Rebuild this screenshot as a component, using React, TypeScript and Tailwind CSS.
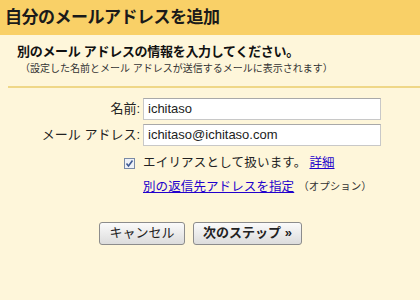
export default function App() {
  const font = "font-['Liberation_Sans','Noto_Sans_CJK_JP',sans-serif]";

  return (
    <div className={`w-[420px] h-[300px] bg-[#fef6da] text-[#222] ${font}`}>
      <div className="h-[35px] bg-[#f9d067] pl-[5px] flex items-center">
        <h1 className="text-[17px] font-bold tracking-[-0.5px] text-[#1a1a1a]">自分のメールアドレスを追加</h1>
      </div>

      <div className="pt-[8px] pl-[17px]">
        <p className="text-[13px] font-bold leading-[18px] tracking-[-0.3px] text-[#111]">
          別のメール アドレスの情報を入力してください。
        </p>
        <p className="pl-[3px] text-[10px] leading-[15px] text-[#333]">
          （設定した名前とメール アドレスが送信するメールに表示されます）
        </p>
      </div>

      <div className="ml-[8px] mt-[10px] h-[2px] bg-[#efd787]" />

      <div className="mt-[10px] grid grid-cols-[140px_238px] gap-x-[3px] gap-y-[4px] items-center text-[12.5px]">
        <label className="text-right text-[13px]">名前:</label>
        <div className="h-[22px] bg-white border border-[#c8c8c8] border-t-[#a9a9a9] px-[4px] flex items-center text-[13px] font-['Liberation_Sans',sans-serif]">
          ichitaso
        </div>
        <label className="text-right text-[13px]">メール アドレス:</label>
        <div className="h-[22px] bg-white border border-[#c8c8c8] border-t-[#a9a9a9] px-[4px] flex items-center text-[13px] font-['Liberation_Sans',sans-serif]">
          ichitaso@ichitaso.com
        </div>

        <div className="flex justify-end pr-[5px] pt-[4px]">
          <span className="w-[11px] h-[11px] border border-[#7a8aa6] bg-[#eef1f7] flex items-center justify-center">
            <svg width="9" height="9" viewBox="0 0 9 9">
              <path d="M1.5 4.5 L3.5 7 L7.5 1.5" fill="none" stroke="#3f5a93" strokeWidth="1.6" />
            </svg>
          </span>
        </div>
        <div className="pt-[4px] flex items-center gap-[3px]">
          <span className="tracking-[0.2px]">エイリアスとして扱います。</span>
          <a className="text-[#2200cc] underline">詳細</a>
        </div>

        <div />
        <div className="pt-[1px] flex items-center gap-[4px]">
          <a className="text-[#2200cc] underline tracking-[0.1px]">別の返信先アドレスを指定</a>
          <span className="text-[10.5px] text-[#333]">（オプション）</span>
        </div>
      </div>

      <div className="mt-[25px] pl-[99px] flex gap-[8px]">
        <button className="w-[86px] h-[23px] rounded-[3px] border border-[#8c8c8c] bg-linear-to-b from-[#fbfbfb] to-[#dcdcdc] text-[13px] text-[#222]">
          キャンセル
        </button>
        <button className="w-[109px] h-[23px] rounded-[3px] border border-[#8c8c8c] bg-linear-to-b from-[#fbfbfb] to-[#dcdcdc] text-[13px] font-bold text-[#222]">
          次のステップ »
        </button>
      </div>
    </div>
  );
}
